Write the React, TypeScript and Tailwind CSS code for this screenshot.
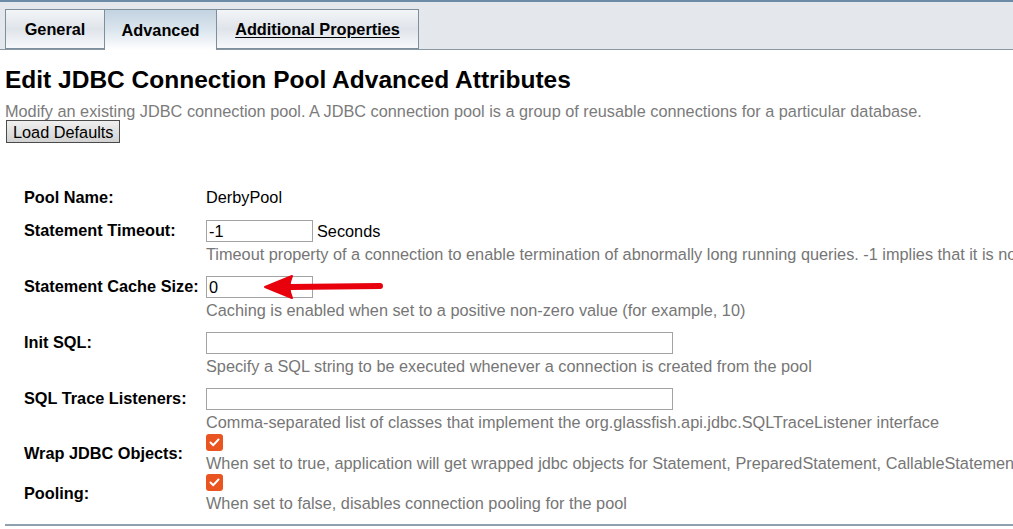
import React from "react";

function Tab({ label, selected, underline }: { label: string; selected?: boolean; underline?: boolean }) {
  return (
    <div
      className={
        "flex items-center justify-center border border-[#7d8f9c] text-[16.3px] font-bold text-black " +
        (selected
          ? "border-b-0 h-[41px] -mb-px bg-gradient-to-b from-[#c3d3e0] via-[#dbe5ee] to-white relative z-10"
          : "h-[40px] bg-gradient-to-b from-[#f3f5f7] via-[#dfe4ea] to-[#f7f9fb]")
      }
    >
      <span className={underline ? "underline underline-offset-2" : ""}>{label}</span>
    </div>
  );
}

function Checkbox() {
  return (
    <span className="w-[17px] h-[17px] rounded-[3px] bg-[#e95420] flex items-center justify-center">
      <svg width="11" height="9" viewBox="0 0 11 9">
        <path d="M1.5 4.5 L4.3 7.2 L9.5 1.5" fill="none" stroke="white" strokeWidth="2" strokeLinecap="round" strokeLinejoin="round" />
      </svg>
    </span>
  );
}

function Help({ children }: { children: React.ReactNode }) {
  return <div className="mt-[3px] text-[16.3px] leading-[18px] text-[#767676] whitespace-nowrap">{children}</div>;
}

function Label({ children, top = 1 }: { children: React.ReactNode; top?: number }) {
  return (
    <div className={"w-[206px] shrink-0 pl-[24px] font-bold leading-[18px] whitespace-nowrap " + (top === 0 ? "pt-0" : "pt-[1px]")}>
      {children}
    </div>
  );
}

function TextBox({ value, wide }: { value: string; wide?: boolean }) {
  return (
    <input
      readOnly
      value={value}
      className={
        "block h-[22px] border border-[#a3a3a3] px-[2px] text-[16.3px] leading-[18px] outline-none " +
        (wide ? "w-[467px]" : "w-[107px]")
      }
    />
  );
}

export default function App() {
  return (
    <div className="w-[1013px] h-[529px] overflow-hidden bg-white relative" style={{ fontFamily: '"Liberation Sans", Arial, sans-serif' }}>
      <div className="border-t-2 border-[#6d8aa6] bg-[#e4e7eb] h-[50px] pt-[7px] pl-[5px] border-b border-b-[#8a98a4]">
        <div className="flex">
          <div className="w-[100px]"><Tab label="General" /></div>
          <div className="w-[113px] -ml-px"><Tab label="Advanced" selected /></div>
          <div className="w-[203px] -ml-px"><Tab label="Additional Properties" underline /></div>
        </div>
      </div>

      <div className="pl-[5px]">
        <h1 className="text-[24.5px] font-bold leading-[28px] mt-[16px] text-black whitespace-nowrap">Edit JDBC Connection Pool Advanced Attributes</h1>
        <p className="text-[16.3px] leading-[18px] mt-[8px] text-[#7b7b7b] whitespace-nowrap">
          Modify an existing JDBC connection pool. A JDBC connection pool is a group of reusable connections for a particular database.
        </p>
        <button className="block ml-px h-[23px] px-[6px] border border-[#4a4a4a] bg-gradient-to-b from-[#efefef] to-[#d2d2d2] text-[16.3px] leading-[18px] text-black">
          Load Defaults
        </button>
      </div>

      <div className="mt-[45px] text-[16.3px] leading-[18px] text-black">
        <div className="flex h-[18px] items-center">
          <div className="w-[206px] shrink-0 pl-[24px] font-bold">Pool Name:</div>
          <div>DerbyPool</div>
        </div>

        <div className="flex mt-[14px]">
          <Label>Statement Timeout:</Label>
          <div>
            <div className="flex items-center">
              <TextBox value="-1" />
              <span className="ml-[4px]">Seconds</span>
            </div>
            <Help>Timeout property of a connection to enable termination of abnormally long running queries. -1 implies that it is not enabled.</Help>
          </div>
        </div>

        <div className="flex mt-[13px]">
          <Label>Statement Cache Size:</Label>
          <div>
            <TextBox value="0" />
            <Help>Caching is enabled when set to a positive non-zero value (for example, 10)</Help>
          </div>
        </div>

        <div className="flex mt-[13px]">
          <Label>Init SQL:</Label>
          <div>
            <TextBox value="" wide />
            <Help>Specify a SQL string to be executed whenever a connection is created from the pool</Help>
          </div>
        </div>

        <div className="flex mt-[13px]">
          <Label>SQL Trace Listeners:</Label>
          <div>
            <TextBox value="" wide />
            <Help>Comma-separated list of classes that implement the org.glassfish.api.jdbc.SQLTraceListener interface</Help>
          </div>
        </div>

        <div className="flex mt-[3px] items-center">
          <Label top={0}>Wrap JDBC Objects:</Label>
          <div>
            <Checkbox />
            <div className="mt-[1px]">
              <Help>When set to true, application will get wrapped jdbc objects for Statement, PreparedStatement, CallableStatement, ResultSet, DatabaseMetaData</Help>
            </div>
          </div>
        </div>

        <div className="flex mt-[2px] items-center">
          <Label top={0}>Pooling:</Label>
          <div>
            <Checkbox />
            <div className="mt-[3px]">
              <Help>When set to false, disables connection pooling for the pool</Help>
            </div>
          </div>
        </div>

        <div className="mt-[12px] ml-[5px] border-t-2 border-[#8fa1ae]" />
      </div>

      <svg className="absolute left-[262px] top-[274px]" width="124" height="26" viewBox="0 0 124 26">
        <path d="M28 13 L118 12" stroke="#e8000c" strokeWidth="6" strokeLinecap="round" />
        <path d="M3 13 L30 2 Q25 13 30 24 Z" fill="#e8000c" stroke="#e8000c" strokeWidth="2" strokeLinejoin="round" />
      </svg>
    </div>
  );
}
